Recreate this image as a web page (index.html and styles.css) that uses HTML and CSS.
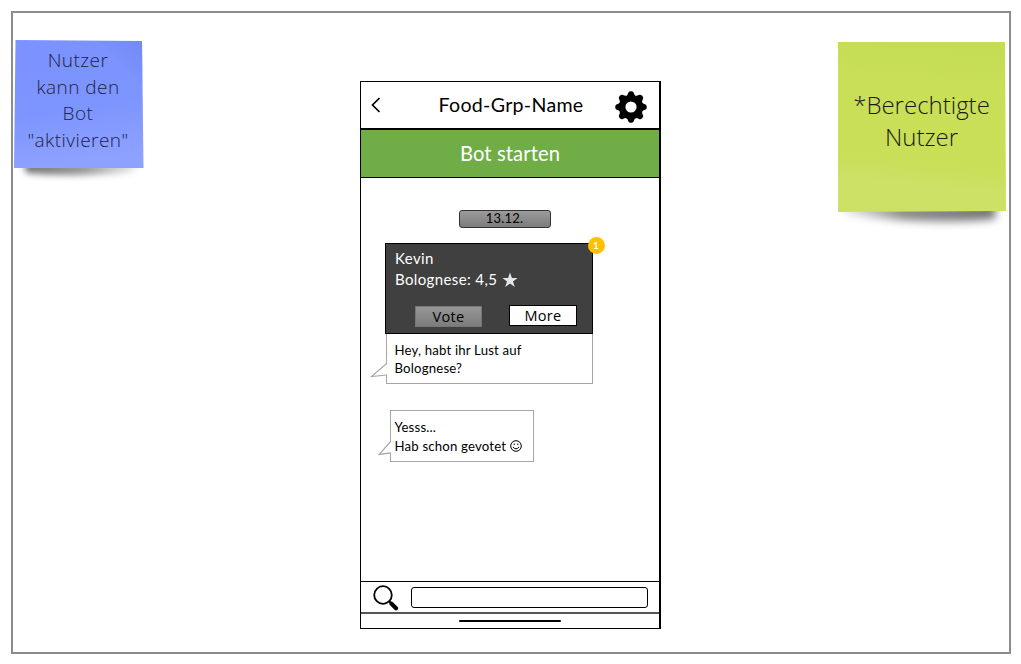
FILE: index.html
```html
<!DOCTYPE html>
<html lang="de">
<head>
<meta charset="utf-8">
<title>Food-Grp-Name</title>
<link rel="stylesheet" href="styles.css">
</head>
<body>
<main class="board">
  <aside class="note note-blue">
    <svg class="paper" viewBox="0 0 150 150" aria-hidden="true">
      <defs>
        <linearGradient id="blue" x1="0" y1="0" x2="0.15" y2="1"><stop offset="0" stop-color="#7b92ff"/><stop offset=".6" stop-color="#7d95ff"/><stop offset="1" stop-color="#8da1ff"/></linearGradient>
        <linearGradient id="fold" x1="0" y1="1" x2="1" y2="0"><stop offset=".4" stop-color="#6f86ee" stop-opacity="0"/><stop offset="1" stop-color="#6f86ee" stop-opacity=".7"/></linearGradient>
        <linearGradient id="fadeRight" x1="0" x2="1"><stop offset="0" stop-color="#000" stop-opacity=".55"/><stop offset=".5" stop-color="#000" stop-opacity=".4"/><stop offset="1" stop-color="#000" stop-opacity=".05"/></linearGradient>
        <filter id="soft" x="-20%" y="-100%" width="140%" height="300%"><feGaussianBlur stdDeviation="3.4"/></filter>
      </defs>
      <path d="M10 122 L128 122 L118 132 Q60 138 12 133Z" fill="url(#fadeRight)" filter="url(#soft)"/>
      <path d="M1.5 0 L128 1 L129.5 128 L0 128Z" fill="url(#blue)"/>
      <path d="M85 1 L128 1 L128.5 45Z" fill="url(#fold)"/>
    </svg>
    <p class="note-text">Nutzer<br>kann den<br>Bot<br>"aktivieren"</p>
  </aside>

  <section class="phone">
    <header class="bar">
      <svg class="back" viewBox="0 0 12 18" aria-hidden="true"><path d="M9.5 2 L2.5 9 L9.5 16"/></svg>
      <h1 class="title">Food-Grp-Name</h1>
      <svg class="gear" viewBox="-16 -16 32 32" aria-hidden="true">
        <circle r="8.8" fill="none" stroke="#000" stroke-width="6.4"/>
        <path id="tooth" d="M-4.8 -10.8 Q-3 -12.6 -2.6 -14.6 Q-2 -15.8 0 -15.8 Q2 -15.8 2.6 -14.6 Q3 -12.6 4.8 -10.8Z"/>
        <use href="#tooth" transform="rotate(45)"/><use href="#tooth" transform="rotate(90)"/><use href="#tooth" transform="rotate(135)"/><use href="#tooth" transform="rotate(180)"/><use href="#tooth" transform="rotate(225)"/><use href="#tooth" transform="rotate(270)"/><use href="#tooth" transform="rotate(315)"/>
      </svg>
    </header>
    <div class="start">Bot starten</div>
    <div class="chat">
      <div class="date">13.12.</div>
      <article class="poll">
        <span class="badge">1</span>
        <div class="poll-head">
          <div class="poll-line">Kevin</div>
          <div class="poll-line"><span class="rating">Bolognese: 4,5</span><svg class="star" viewBox="0 0 16 16" aria-hidden="true"><path d="M8 .6 L9.9 6 H15.6 L11 9.4 L12.8 15 L8 11.6 L3.2 15 L5 9.4 L.4 6 H6.1Z"/></svg></div>
          <div class="actions"><button class="vote">Vote</button><button class="more">More</button></div>
        </div>
        <div class="bubble first">
          <svg class="tail" viewBox="0 0 18 16" aria-hidden="true"><path d="M17 1.2 L1.3 14.6 L17 13"/></svg>
          Hey, habt ihr Lust auf<br>Bolognese?
        </div>
      </article>
      <article class="bubble second">
        <svg class="tail" viewBox="0 0 14 16" aria-hidden="true"><path d="M13 1 L1.3 14.4 L13 12.8"/></svg>
        Yesss...<br>Hab schon gevotet<svg class="smile" viewBox="0 0 12 12" aria-hidden="true"><circle cx="6" cy="6" r="5.3"/><path d="M4.2 3.5 V5.1 M7.8 3.5 V5.1 M2.9 7 Q6 10.7 9.1 7"/></svg>
      </article>
    </div>
    <div class="search">
      <svg class="lens" viewBox="0 0 26 26" aria-hidden="true"><circle cx="10" cy="10" r="8.8" fill="none" stroke="#000" stroke-width="1.8"/><path d="M16.2 16.2 L18.5 18.5" stroke="#000" stroke-width="2"/><path d="M18.5 18.8 L23 23.2" stroke="#000" stroke-width="4.2" stroke-linecap="round"/></svg>
      <div class="field"></div>
    </div>
    <footer class="home"><div class="home-line"></div></footer>
  </section>

  <aside class="note note-green">
    <svg class="paper" viewBox="0 0 180 200" aria-hidden="true">
      <defs>
        <linearGradient id="green" x1="0.1" y1="0" x2="0" y2="1"><stop offset="0" stop-color="#c5dc55"/><stop offset=".2" stop-color="#c8df57"/><stop offset=".65" stop-color="#c8df57"/><stop offset=".8" stop-color="#cde167"/><stop offset="1" stop-color="#cce164"/></linearGradient>
        <linearGradient id="fadeLeft" x1="0" x2="1"><stop offset="0" stop-color="#000" stop-opacity=".05"/><stop offset=".4" stop-color="#000" stop-opacity=".45"/><stop offset="1" stop-color="#000" stop-opacity=".55"/></linearGradient>
        <filter id="soft2" x="-20%" y="-100%" width="140%" height="300%"><feGaussianBlur stdDeviation="4.5"/></filter>
      </defs>
      <path d="M2 162 L158 162 L157 177 Q90 184 8 172Z" fill="url(#fadeLeft)" filter="url(#soft2)"/>
      <path d="M0 0 L167 0 L168 169 L0 170Z" fill="url(#green)"/>
    </svg>
    <p class="note-text">*Berechtigte<br>Nutzer</p>
  </aside>
</main>
</body>
</html>
```
FILE: styles.css
```css
* { box-sizing: border-box; }
body { margin: 0; padding: 11px 10px 10px 11px; width: 1021px; height: 664px; background: #fff; color: #000; font-family: Lato, "Liberation Sans", sans-serif; }
.board { display: flex; align-items: flex-start; justify-content: space-between; width: 1000px; height: 643px; border: 2px solid #8c8c8c; padding-right: 3px; }
.note { position: relative; font-family: "Open Sans", "Noto Sans", sans-serif; font-weight: 350; color: #1a1a1a; text-align: center; }
.note-blue { width: 130px; height: 128px; margin-top: 27px; }
.note-green { width: 168px; height: 170px; margin-top: 29px; }
.paper { position: absolute; left: 0; top: 0; }
.note-blue .paper { left: .5px; width: 150px; height: 150px; }
.note-green .paper { width: 180px; height: 200px; }
.note-text { position: relative; margin: 0; }
.note-blue .note-text { padding-top: 7px; font-size: 19px; line-height: 26.6px; letter-spacing: .45px; color: #1d2340; }
.note-green .note-text { padding: 47px 1px 0 0; font-size: 24px; line-height: 32px; }

.phone { display: flex; flex-direction: column; width: 301px; height: 548px; margin: 68px 0 0 39px; border: 1px solid #000; border-right-width: 2px; background: #fff; }
.bar { display: flex; align-items: center; height: 48px; padding: 0 12px 0 9px; border-bottom: 2px solid #000; }
.back { width: 12px; height: 18px; fill: none; stroke: #000; stroke-width: 1.7; }
.title { flex: 1; margin: 0 0 0 57px; font-size: 19.6px; font-weight: 400; line-height: 24px; letter-spacing: .3px; white-space: nowrap; }
.gear { width: 32px; height: 32px; margin-top: 3px; }
.start { height: 48px; padding-left: 1px; border-bottom: 1px solid #000; background: #70ad47; color: #fff; text-align: center; font-size: 20.2px; line-height: 46px; letter-spacing: .1px; }
.chat { flex: 1; padding-top: 32px; }
.date { width: 92px; height: 18px; margin: 0 0 0 98px; border: 1px solid #333; border-radius: 3px; background: linear-gradient(#9b9b9b, #7c7c7c); text-align: center; font-size: 13px; line-height: 15px; letter-spacing: .2px; }
.poll { position: relative; width: 208px; margin: 15px 0 0 24px; }
.badge { position: absolute; right: -12px; top: -6px; width: 17px; height: 17px; border-radius: 50%; background: #ffc000; color: #fff; text-align: center; font-size: 10px; font-weight: 700; line-height: 17px; }
.poll-head { height: 91px; padding: 4px 14px 0 9.5px; border: 1px solid #000; background: #404040; color: #fff; font-size: 15px; line-height: 21px; letter-spacing: .38px; }
.poll-line { display: flex; align-items: center; white-space: nowrap; }
.star { width: 16px; height: 16px; margin-left: 5px; fill: #e7e6e6; }
.actions { display: flex; justify-content: space-between; margin: 15px 0 0 20px; }
.vote, .more { padding: 0; font-family: "Open Sans", "Noto Sans", sans-serif; font-size: 14.5px; line-height: 19px; letter-spacing: .3px; color: #000; text-align: center; }
.vote { width: 67px; height: 21px; margin-top: 1px; border: 1px solid #777; background: linear-gradient(#969696, #7c7c7c); }
.more { width: 68px; height: 21px; margin-right: .5px; border: 1px solid #000; background: #fff; }
.bubble { position: relative; border: 1px solid #a6a6a6; background: #fff; font-size: 13.2px; line-height: 18px; letter-spacing: .18px; white-space: nowrap; }
.first { height: 50px; margin-left: 1px; border-top: 0; padding: 7px 0 0 8px; }
.tail { position: absolute; fill: #fff; stroke: #a6a6a6; stroke-width: 1.2; }
.first .tail { left: -17px; top: 28px; width: 18px; height: 16px; }
.second { width: 144px; height: 52px; margin: 26px 0 0 29px; padding: 7px 0 0 4px; line-height: 18.6px; }
.second .tail { left: -13px; top: 29px; width: 14px; height: 16px; }
.smile { width: 12px; height: 12px; margin-left: 4px; vertical-align: -1px; fill: none; stroke: #000; stroke-width: 1; }
.search { display: flex; align-items: center; height: 33px; padding-left: 12px; border-top: 1px solid #000; border-bottom: 2px solid #555; }
.lens { width: 26px; height: 26px; margin-top: 2px; }
.field { width: 237px; height: 21px; margin-left: 12px; border: 1px solid #000; border-radius: 3px; }
.home { height: 14px; padding-top: 6px; }
.home-line { width: 102px; height: 2px; margin-left: 98px; border-radius: 1px; background: #000; }
```
